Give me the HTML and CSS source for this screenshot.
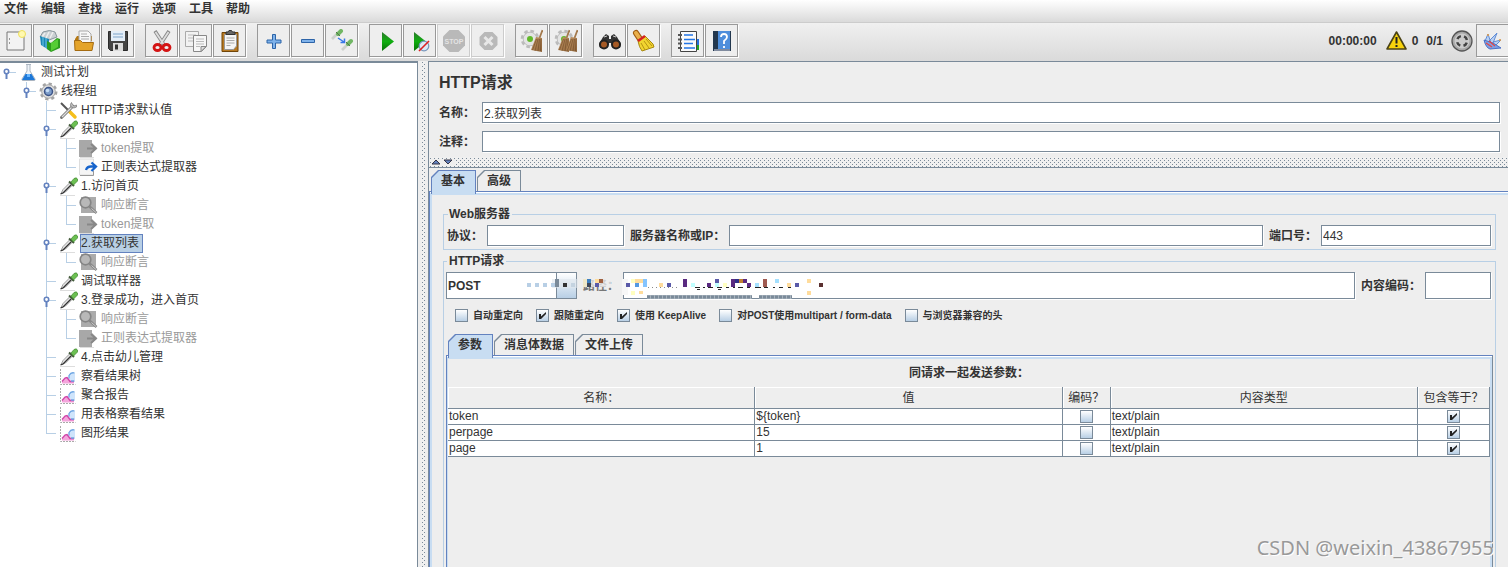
FILE: index.html
```html
<!DOCTYPE html>
<html lang="zh-CN">
<head>
<meta charset="utf-8">
<title>HTTP请求</title>
<link rel="stylesheet" href="styles.css">
</head>
<body>
<svg class="defs" aria-hidden="true">
  <defs>
    <linearGradient id="green" x1="0" y1="0" x2="0" y2="1"><stop offset="0" stop-color="#2c7a2c"/><stop offset=".5" stop-color="#0fae0f"/><stop offset="1" stop-color="#067006"/></linearGradient>
    <linearGradient id="straw" x1="0" y1="0" x2="1" y2="1"><stop offset="0" stop-color="#c79a68"/><stop offset="1" stop-color="#8d6238"/></linearGradient>
    <symbol id="handle" viewBox="0 0 9 12"><path d="M4.500 5v6" stroke="#6382bf" stroke-width="2"/><circle cx="4.500" cy="3.500" r="2.200" fill="#fff" stroke="#6382bf" stroke-width="1.600"/></symbol>
    <symbol id="flask" viewBox="0 0 19 19"><path d="M7 1.500h5M8 2v6l-5 8q-.5 1.500 1 1.500h11q1.500 0 1-1.500l-5-8V2" fill="#eef3f8" stroke="#aab4c0"/><path d="M6.500 11h6l3.500 6H3z" fill="#1d78d8"/><path d="M8 11h3v3H8z" fill="#64b4ff"/></symbol>
    <symbol id="gear" viewBox="0 0 19 19"><circle cx="9.500" cy="9.500" r="7.800" fill="none" stroke="#a4a4a4" stroke-width="2.400" stroke-dasharray="3.200 2.900"/><circle cx="9.500" cy="9.500" r="6.800" fill="#dcdcdc" stroke="#a4a4a4"/><circle cx="9.500" cy="9.500" r="4" fill="#7c9cc9" stroke="#3c5488" stroke-width="1.500"/><circle cx="8.500" cy="8.500" r="1.800" fill="#c4dcf6"/></symbol>
    <symbol id="tools" viewBox="0 0 19 19"><path d="M2 2l8 8" stroke="#555" stroke-width="2"/><path d="M10 10l6 6" stroke="#f5bf1c" stroke-width="3.500" stroke-linecap="round"/><path d="M2.500 16.500L14 5" stroke="#777" stroke-width="3" stroke-linecap="round"/><path d="M3 16L14 5" stroke="#ddd" stroke-width="1.200"/><path d="M12.500 1.500q-2 2-.5 4.500 3 2 5.500 0V4L15 5l-1.500-1.500z" fill="#bbb" stroke="#777" stroke-width=".7"/></symbol>
    <symbol id="pipette" viewBox="0 0 19 19"><path d="M1 18.500h15" stroke="#ddd"/><path d="M2 16.500l2-4 7-7 2.500 2.500-7 7z" fill="#e5e5e5" stroke="#888" stroke-width=".8"/><path d="M1.500 17l2.500-1 8-8" fill="none" stroke="#333" stroke-width="1.200"/><path d="M10 4.500l5 4.500" stroke="#435b3a" stroke-width="2"/><path d="M12 5l3-3.500q2.500-1.500 3.500.5v2L14.500 8z" fill="#6cc052" stroke="#41862f" stroke-width=".7"/></symbol>
    <symbol id="extract-off" viewBox="0 0 19 19"><path d="M0 1h13v3l5 5-5 5v4H0z" fill="#a8a8a8"/><path d="M8 9.500h8M12 5l5 4.500-5 4.500" stroke="#888" stroke-width="2" fill="none"/><path d="M1 18.500h14" stroke="#ddd"/></symbol>
    <symbol id="extract" viewBox="0 0 19 19"><path d="M.5 1h14v16H.5z" fill="#f5f5f5" stroke="#ddd"/><path d="M1 17.500h13.500V13" fill="none" stroke="#999"/><path d="M7 12q1-3.500 5-3.500h5M12.500 4.500l4.500 4-4.500 4.500" stroke="#1764cc" stroke-width="2.300" fill="none"/></symbol>
    <symbol id="assert-off" viewBox="0 0 19 19"><path d="M2 1h15v16H2z" fill="#ababab"/><circle cx="6.500" cy="6.500" r="5.300" fill="#b8b8b8" stroke="#858585" stroke-width="1.700"/><path d="M10.500 10.500l7 6.500" stroke="#888" stroke-width="2.500"/><path d="M12.500 12.500l4.500 4" stroke="#ccc"/></symbol>
    <symbol id="chart" viewBox="0 0 19 19"><path d="M1.500 2v15.500h15" fill="none" stroke="#aaa" stroke-dasharray="2 1"/><path d="M3 16.500V14l4-4 3 1 2 3 3 1v1.500z" fill="#f4a6dc"/><path d="M3 14.500l3-3.500 2-.5 3 4h4" fill="none" stroke="#d045a8" stroke-width="1.300"/><path d="M10 12V8q2-4 6-2v7l-3 1z" fill="#cfe4fb"/><path d="M10 11.500V8.500q2-3.500 5.500-2.500M12 14h3.500" fill="none" stroke="#6ea5e2" stroke-width="1.300"/></symbol>
    <symbol id="broom" viewBox="0 0 12 24"><path d="M8.500 9L11.500 1" stroke="#a3794c" stroke-width="1.800"/><path d="M5 8l6 1v14l-11-2z" fill="url(#straw)"/><path d="M5.500 10l-4 11M7 10l-3 12M8.500 10L7 22M10 10l-.5 12" stroke="#75502c" stroke-width=".7"/></symbol>
    <symbol id="cog" viewBox="0 0 22 22"><circle cx="11" cy="11" r="8.500" fill="none" stroke="#bbb" stroke-width="3.500" stroke-dasharray="3.800 2.900"/><circle cx="11" cy="11" r="7.500" fill="#e4e4e4" stroke="#bbb"/><circle cx="11" cy="11" r="3.300" fill="#62b92a"/></symbol>
  </defs>
</svg>

<nav class="menubar">
  <button>文件</button><button>编辑</button><button>查找</button><button>运行</button><button>选项</button><button>工具</button><button>帮助</button>
</nav>

<div class="toolbar">
  <div class="group">
    <button aria-label="新建"><svg viewBox="0 0 24 24"><path d="M3 3h17v18H3z" fill="#f3f3f3" stroke="#777"/><path d="M5.500 9v2M5.500 13v2" stroke="#999"/><circle cx="18" cy="5" r="3.500" fill="#fff8b0" stroke="#efe05a"/></svg></button>
    <button aria-label="模板"><svg viewBox="0 0 24 24"><path d="M2 8l3-5q7-3 12 0l2 5-8 3z" fill="#c9cfd2" stroke="#88959b"/><path d="M4 8l3-4M8 9l3-6M12 9l3-6" stroke="#eee" stroke-width="1.500"/><path d="M2 7l9 3v11l-8-5z" fill="#1c86b5"/><path d="M5 8v9M8 9v10" stroke="#70c9e6"/><path d="M9 12l4 2 6-5 3 1v9l-9 4-4-3z" fill="#2c9c1e"/><path d="M13 14l7-4v8l-7 4z" fill="#55cd35"/></svg></button>
    <button aria-label="打开"><svg viewBox="0 0 24 24"><path d="M3 10l2-3h15v5H3z" fill="#b57813"/><path d="M7 2h9l3 3v10H7z" fill="#f7f7f7" stroke="#aaa"/><path d="M9 5h6M9 7.500h8M9 10h8" stroke="#aaa"/><path d="M2.500 11.500h6l2 2h11L20 21.500H3z" fill="#e4a42a" stroke="#a56b10"/></svg></button>
    <button aria-label="保存"><svg viewBox="0 0 24 24"><path d="M2.500 2.500h19v19h-17l-2-2z" fill="#454545" stroke="#2b2b2b"/><path d="M5 2h14v10H5z" fill="#e4eef8"/><path d="M7 5h10M7 8h10" stroke="#7da3c9"/><path d="M7 14h10v8H7z" fill="#ddd"/><path d="M9 15.500h3v5H9z" fill="#333"/></svg></button>
  </div>
  <div class="group">
    <button aria-label="剪切"><svg viewBox="0 0 24 24"><path d="M5 2l9 14M19 2l-9 14" stroke="#888" stroke-width="3.500"/><path d="M5.500 3l8 12M18.500 3l-8 12" stroke="#ddd" stroke-width="1.800"/><ellipse cx="7.500" cy="18.500" rx="3.500" ry="3" fill="none" stroke="#d41414" stroke-width="2.800"/><ellipse cx="16.500" cy="18.500" rx="3.500" ry="3" fill="none" stroke="#d41414" stroke-width="2.800"/></svg></button>
    <button aria-label="复制"><svg viewBox="0 0 24 24"><path d="M1.500 2.500h13v15h-13z" fill="#f2f2f2" stroke="#aaa"/><path d="M4 6h8M4 9h5M4 12h5" stroke="#bbb"/><path d="M9.500 6.500h13v11l-5 5h-8z" fill="#f7f7f7" stroke="#888"/><path d="M12 10h8M12 12.500h8M12 15h8M12 17.500h4" stroke="#bbb"/><path d="M22 17.500h-5v5z" fill="#ddd" stroke="#888"/></svg></button>
    <button aria-label="粘贴"><svg viewBox="0 0 24 24"><path d="M4 3.500h16v19H4z" fill="#b87a22" stroke="#704508"/><path d="M6.500 5.500h12V17l-3 3.500h-9z" fill="#f5f5f5" stroke="#999"/><path d="M8.500 9h8M8.500 11.500h8M8.500 14h8M8.500 16.500h4" stroke="#aaa"/><path d="M8 5V3h2l1-1.500h2.500l1 1.500H17v2.500H8z" fill="#666" stroke="#333"/></svg></button>
  </div>
  <div class="group">
    <button aria-label="展开"><svg viewBox="0 0 24 24"><path d="M10.500 5.500h3v5.500h5.500v3h-5.500v5.500h-3v-5.500H5v-3h5.500z" fill="#7fb2ea" stroke="#2d64a8"/></svg></button>
    <button aria-label="折叠"><svg viewBox="0 0 24 24"><path d="M5.500 10.500h13v3h-13z" fill="#7fb2ea" stroke="#2d64a8"/></svg></button>
    <button aria-label="切换"><svg viewBox="0 0 24 24"><path d="M2 10l6-6M12 21l6-6" stroke="#cdd1cd" stroke-width="2.800"/><path d="M8 5l3-3M18 15l3-3" stroke="#71b764" stroke-width="4" stroke-linecap="round"/><path d="M6 3l4 4M16 13l4 4" stroke="#56724f" stroke-width="1"/><path d="M8 9l6 4M14.500 9.500v4h-4" fill="none" stroke="#3878e8" stroke-width="1.500"/></svg></button>
  </div>
  <div class="group">
    <button aria-label="启动"><svg viewBox="0 0 24 24"><path d="M8 3l12 9.500L8 22z" fill="url(#green)"/></svg></button>
    <button aria-label="不停顿开始"><svg viewBox="0 0 24 24"><path d="M6 3l12 9.500L6 22z" fill="url(#green)"/><circle cx="16" cy="17" r="4.800" fill="#dce8f5" stroke="#7896bb" stroke-width="1.200"/><path d="M11 22L21 12" stroke="#d22" stroke-width="1.600"/></svg></button>
    <button aria-label="停止" disabled><svg viewBox="0 0 24 24"><path d="M7.500 1h9L23 7.500v9L16.500 23h-9L1 16.500v-9z" fill="#b9b9b9"/><text class="stop-text" x="12" y="14.500" text-anchor="middle">STOP</text></svg></button>
    <button aria-label="关闭" disabled><svg viewBox="0 0 24 24"><path d="M8.500 3h8L21.500 8v8l-5 5h-8l-5-5V8z" fill="#b9b9b9"/><path d="M8.500 8l8 8M16.500 8l-8 8" stroke="#e8e8e8" stroke-width="3"/></svg></button>
  </div>
  <div class="group">
    <button aria-label="清除"><svg viewBox="0 0 24 24"><use href="#cog" x="0" y="0" width="20" height="20"/><use href="#broom" x="11" y="0" width="12" height="24"/></svg></button>
    <button aria-label="清除全部"><svg viewBox="0 0 24 24"><use href="#cog" x="0" y="0" width="20" height="20"/><use href="#broom" x="4" y="0" width="12" height="24"/><use href="#broom" x="12" y="0" width="12" height="24"/></svg></button>
  </div>
  <div class="group">
    <button aria-label="查找"><svg viewBox="0 0 24 24"><path d="M5 8l3-3 3 2v3h2V7l3-2 3 3 4 7-1 4h-7l-2-5h-2l-2 5H2l-1-4z" fill="#333"/><circle cx="6" cy="15.500" r="4" fill="#a65a25" stroke="#222" stroke-width="2"/><circle cx="18" cy="15.500" r="4" fill="#a65a25" stroke="#222" stroke-width="2"/><path d="M6 8l3-1M15 7l3 1" stroke="#ccc"/></svg></button>
    <button aria-label="重置查找"><svg viewBox="0 0 24 24"><path d="M4 4l4 6" stroke="#a05c12" stroke-width="6" stroke-linecap="round"/><path d="M4 4l4 6" stroke="#eab04c" stroke-width="4" stroke-linecap="round"/><path d="M6 12l7-5 8 8 1 3-12 4q-3-4-4-10z" fill="#f1d430" stroke="#a88810"/><path d="M9 14l4 7M12 12l5 7M14 10l6 7" stroke="#b69312"/><path d="M6 12l7-5" stroke="#d52020" stroke-width="2.500"/></svg></button>
  </div>
  <div class="group">
    <button aria-label="函数助手"><svg viewBox="0 0 24 24"><path d="M4.500 2.500h16v20h-16z" fill="#fafafa" stroke="#444"/><path d="M21 10h2v6h-2z" fill="#236edb"/><path d="M21 16h2v5h-2z" fill="#20a020"/><path d="M8 6h9M8 10.500h11M8 14.500h9M8 19h11" stroke="#2376e6" stroke-width="1.500"/><path d="M2 6h4M2 10.500h4M2 14.500h4M2 19h4" stroke="#555" stroke-width="2"/></svg></button>
    <button aria-label="帮助"><svg viewBox="0 0 24 24"><path d="M3 2h18v20H3z" fill="#23384f"/><path d="M8 2h12v18H8z" fill="#4e8edb"/><path d="M4 21h16" stroke="#dde"/><path d="M11 8q0-3 3-3t3 3q0 2-3 4v3M14 17v2" fill="none" stroke="#fff" stroke-width="1.800"/></svg></button>
  </div>
  <div class="status">
    <span class="time">00:00:00</span>
    <svg class="warn" viewBox="0 0 21 19"><path d="M10.500 1L20 18H1z" fill="#f8d30c" stroke="#4b4315" stroke-width="1.600" stroke-linejoin="round"/><path d="M10.500 6v6.500M10.500 14v2" stroke="#222" stroke-width="2"/></svg>
    <span class="errors">0</span>
    <span class="threads">0/1</span>
    <svg class="ring" viewBox="0 0 22 22"><circle cx="11" cy="11" r="10" fill="#aaa" stroke="#555" stroke-width="1.300"/><circle cx="11" cy="11" r="7.500" fill="#ccc"/><circle cx="11" cy="11" r="5" fill="none" stroke="#444" stroke-width="2.500" stroke-dasharray="4.500 3.350" stroke-dashoffset="-1.600"/></svg>
    <button aria-label="日志"><svg viewBox="0 0 24 24"><path d="M4 12l3-7 3 9M8 12l8-8-4 10M12 13l8-2-6 6" fill="#b9d0f2" stroke="#5f8cd6"/><path d="M3 11q2 8 6 9l11-1-8-5z" fill="#7d9fe6" stroke="#4c70c4"/><path d="M5 14l6 4M8 12l6 5" stroke="#e04848" stroke-width="1.300"/><circle cx="7" cy="6" r="1" fill="#e69b42"/><circle cx="19" cy="11" r="1" fill="#e69b42"/></svg></button>
  </div>
</div>

<main class="workspace">
  <aside class="tree-pane">
    <ul class="tree root">
      <li><div class="node"><svg class="knob"><use href="#handle"/></svg><svg class="ico"><use href="#flask"/></svg><span>测试计划</span></div>
        <ul class="tree">
          <li><div class="node"><svg class="knob"><use href="#handle"/></svg><svg class="ico"><use href="#gear"/></svg><span>线程组</span></div>
            <ul class="tree">
              <li><div class="node"><i class="knob"></i><svg class="ico"><use href="#tools"/></svg><span>HTTP请求默认值</span></div></li>
              <li><div class="node"><svg class="knob"><use href="#handle"/></svg><svg class="ico"><use href="#pipette"/></svg><span>获取token</span></div>
                <ul class="tree">
                  <li><div class="node off"><i class="knob"></i><svg class="ico"><use href="#extract-off"/></svg><span>token提取</span></div></li>
                  <li><div class="node"><i class="knob"></i><svg class="ico"><use href="#extract"/></svg><span>正则表达式提取器</span></div></li>
                </ul></li>
              <li><div class="node"><svg class="knob"><use href="#handle"/></svg><svg class="ico"><use href="#pipette"/></svg><span>1.访问首页</span></div>
                <ul class="tree">
                  <li><div class="node off"><i class="knob"></i><svg class="ico"><use href="#assert-off"/></svg><span>响应断言</span></div></li>
                  <li><div class="node off"><i class="knob"></i><svg class="ico"><use href="#extract-off"/></svg><span>token提取</span></div></li>
                </ul></li>
              <li><div class="node"><svg class="knob"><use href="#handle"/></svg><svg class="ico"><use href="#pipette"/></svg><span class="selected">2.获取列表</span></div>
                <ul class="tree">
                  <li><div class="node off"><i class="knob"></i><svg class="ico"><use href="#assert-off"/></svg><span>响应断言</span></div></li>
                </ul></li>
              <li><div class="node"><i class="knob"></i><svg class="ico"><use href="#pipette"/></svg><span>调试取样器</span></div></li>
              <li><div class="node"><svg class="knob"><use href="#handle"/></svg><svg class="ico"><use href="#pipette"/></svg><span>3.登录成功，进入首页</span></div>
                <ul class="tree">
                  <li><div class="node off"><i class="knob"></i><svg class="ico"><use href="#assert-off"/></svg><span>响应断言</span></div></li>
                  <li><div class="node off"><i class="knob"></i><svg class="ico"><use href="#extract-off"/></svg><span>正则表达式提取器</span></div></li>
                </ul></li>
              <li><div class="node"><i class="knob"></i><svg class="ico"><use href="#pipette"/></svg><span>4.点击幼儿管理</span></div></li>
              <li><div class="node"><i class="knob"></i><svg class="ico"><use href="#chart"/></svg><span>察看结果树</span></div></li>
              <li><div class="node"><i class="knob"></i><svg class="ico"><use href="#chart"/></svg><span>聚合报告</span></div></li>
              <li><div class="node"><i class="knob"></i><svg class="ico"><use href="#chart"/></svg><span>用表格察看结果</span></div></li>
              <li><div class="node"><i class="knob"></i><svg class="ico"><use href="#chart"/></svg><span>图形结果</span></div></li>
            </ul></li>
        </ul></li>
    </ul>
  </aside>
  <div class="divider"></div>
  <section class="editor">
    <div class="heading">
      <h1>HTTP请求</h1>
      <div class="line"><label for="name">名称：</label><input id="name" type="text" value="2.获取列表"></div>
      <div class="line"><label for="note">注释：</label><input id="note" type="text"></div>
    </div>
    <div class="splitter"><svg viewBox="0 0 24 6"><path d="M1 5l4-4 4 4z" fill="#6382bf" stroke="#334"/><path d="M13 1l4 4 4-4z" fill="#6382bf" stroke="#334"/></svg></div>

    <div class="tabs outer"><button class="tab active">基本</button><button class="tab">高级</button></div>
    <div class="page outer-page">
      <fieldset class="web">
        <legend>Web服务器</legend>
        <div class="row">
          <label for="proto">协议：</label><input id="proto" class="w-proto" type="text">
          <label for="host">服务器名称或IP：</label><input id="host" class="grow" type="text">
          <label for="port">端口号：</label><input id="port" class="w-port" type="text" value="443">
        </div>
      </fieldset>
      <fieldset class="request">
        <legend>HTTP请求</legend>
        <div class="row tall">
          <select aria-label="方法"><option>POST</option></select>
          <label class="path-label" for="path">路径：</label><input id="path" class="grow" type="text">
          <label for="enc">内容编码：</label><input id="enc" class="w-enc" type="text">
          <svg class="mosaic" viewBox="526 276 304 26" aria-hidden="true">
            <path d="M552 279h26v9h-26z" fill="#dfe6ec" opacity=".6"/>
            <path d="M527 283h4v4h-4zM535 283h4v4h-4zM543 283h4v4h-4zM551 283h4v4h-4z" fill="#b8cfe5"/>
            <path d="M555 279h4v8h-4z" fill="#7a8a99"/><path d="M563 283h4v4h-4z" fill="#333"/><path d="M571 283h4v4h-4z" fill="#c4d3e0"/>
            <path d="M582 278h29v9h-29z" fill="#eee" opacity=".75"/>
            <path d="M583 279h4v8h-4z" fill="#f0e8c8"/><path d="M587 279h4v4h-4z" fill="#4080c0"/><path d="M587 283h4v4h-4z" fill="#404858"/><path d="M595 283h4v4h-4z" fill="#5a5aa8"/><path d="M595 279h4v4h-4z" fill="#ffdc9c"/><path d="M599 279h4v4h-4z" fill="#a06040"/>
            <path d="M622 279h6v16h-6z" fill="#f7f7f7"/>
            <path d="M626 283h4v4h-4zM667 283h4v4h-4zM715 279h4v4h-4zM795 283h4v4h-4z" fill="#5a5aa8"/>
            <path d="M631 279h4v4h-4zM723 283h4v4h-4zM631 291h4v4h-4z" fill="#ffffc0"/>
            <path d="M635 279h8v4h-8zM659 283h4v4h-4zM787 283h4v4h-4zM807 279h4v4h-4zM807 291h4v4h-4zM639 291h4v3h-4z" fill="#ffdc9c"/>
            <path d="M643 279h4v8h-4z" fill="#84c4ff"/><path d="M635 283h4v4h-4z" fill="#5599e0"/>
            <path d="M683 279h4v8h-4zM707 283h4v4h-4zM731 279h4v8h-4zM743 279h4v4h-4zM747 283h4v4h-4z" fill="#5a2a80"/>
            <path d="M735 279h4v4h-4z" fill="#303088"/><path d="M739 279h4v4h-4z" fill="#c08030"/>
            <path d="M691 283h4v4h-4zM715 283h4v4h-4z" fill="#c0ffff"/><path d="M755 283h4v4h-4zM775 279h4v4h-4z" fill="#a4e0ff"/>
            <path d="M763 279h4v8h-4z" fill="#a05a50"/><path d="M819 283h4v4h-4z" fill="#5a3030"/>
            <path d="M648 287.500h30" stroke="#888" stroke-dasharray="1 3"/>
            <path d="M695 287.500h5M703 287.500h2M708 287.500h5M717 287.500h5M726 287.500h3M733 287.500h2M738 287.500h5M747 287.500h3M755 287.500h6M764 287.500h4M773 287.500h2M779 287.500h4M788 287.500h3M697 289.500h3M718 289.500h3" stroke="#222"/>
            <path d="M647 297h105M759 297h33" stroke="#a9b4be" stroke-width="4"/><path d="M647 297h105M759 297h33" stroke="#7a8a99" stroke-width="3" stroke-dasharray="3 1"/>
          </svg>
        </div>
        <div class="checks">
          <label><input type="checkbox">自动重定向</label>
          <label><input type="checkbox" checked>跟随重定向</label>
          <label><input type="checkbox" checked>使用 KeepAlive</label>
          <label><input type="checkbox">对POST使用multipart / form-data</label>
          <label><input type="checkbox">与浏览器兼容的头</label>
        </div>
        <div class="tabs inner"><button class="tab active">参数</button><button class="tab">消息体数据</button><button class="tab">文件上传</button></div>
        <div class="page inner-page">
          <p class="caption" id="params-title">同请求一起发送参数：</p>
          <table aria-labelledby="params-title">
            <colgroup><col><col><col class="c-enc"><col><col class="c-inc"></colgroup>
            <thead><tr><th>名称：</th><th>值</th><th>编码？</th><th>内容类型</th><th>包含等于？</th></tr></thead>
            <tbody>
              <tr><td>token</td><td>${token}</td><td class="mid"><input type="checkbox" aria-label="编码"></td><td>text/plain</td><td class="mid"><input type="checkbox" aria-label="包含等于" checked></td></tr>
              <tr><td>perpage</td><td>15</td><td class="mid"><input type="checkbox" aria-label="编码"></td><td>text/plain</td><td class="mid"><input type="checkbox" aria-label="包含等于" checked></td></tr>
              <tr><td>page</td><td>1</td><td class="mid"><input type="checkbox" aria-label="编码"></td><td>text/plain</td><td class="mid"><input type="checkbox" aria-label="包含等于" checked></td></tr>
            </tbody>
          </table>
        </div>
      </fieldset>
    </div>
  </section>
</main>
<div class="watermark">CSDN @weixin_43867955</div>
</body>
</html>
```

FILE: styles.css
```css
:root {
  --slate: #7a8a99;
  --blue: #6382bf;
  --pale: #b8cfe5;
  --sky: #c8ddf2;
  --panel: #eeeeee;
}

* { box-sizing: border-box; }

body {
  margin: 0;
  height: 100vh;
  display: flex;
  flex-direction: column;
  overflow: hidden;
  background: var(--panel);
  color: #333;
  font: 12px/16px "Liberation Sans", "Noto Sans CJK SC", sans-serif;
}

button, input, select { font: inherit; color: inherit; margin: 0; padding: 0; }
button { border: 0; background: none; }
.defs { position: absolute; width: 0; height: 0; }

.menubar {
  display: flex;
  gap: 13px;
  height: 22px;
  padding: 0 4px 5px;
  background: linear-gradient(#fff, #dadada);
  font-weight: bold;
}

.toolbar {
  display: flex;
  gap: 11px;
  padding: 1px 0 4px;
  border-top: 1px solid #ccc;
  background: linear-gradient(#f0f0f0, #dadada);
}
.group { display: flex; gap: 1px; }
.group:first-child { margin-left: -1px; }
.toolbar button {
  width: 33px;
  height: 33px;
  display: grid;
  place-items: center;
  border: 1px solid #999;
  background: var(--panel);
  box-shadow: 1px 1px 0 #fff;
}
.toolbar button:disabled { border-color: #ccc; }
.toolbar button svg { width: 24px; height: 24px; }
.stop-text { font: bold 7px "Liberation Sans", sans-serif; fill: #e4e4e4; }
.status { display: flex; align-items: center; margin-left: auto; font-weight: bold; }
.warn { width: 21px; height: 19px; margin: 0 5px 0 9px; }
.threads { margin: 0 8px; }
.ring { width: 22px; height: 22px; margin-right: 3px; }
.status button { width: 32px; border-right: 0; }

.workspace { flex: 1; min-height: 0; display: flex; }

.tree-pane {
  flex: 0 0 418px;
  padding: 0;
  background: #fff;
  border-top: 2px solid var(--slate);
  border-right: 1px solid var(--slate);
}
.tree { list-style: none; margin: 0; padding: 0 0 0 20px; }
.tree.root { padding: 0; }
.tree li { position: relative; }
.tree .tree > li::before {
  content: "";
  position: absolute;
  left: 6px;
  top: 0;
  bottom: 0;
  width: 1px;
  background: var(--pale);
}
.tree .tree > li:last-child::before { bottom: auto; height: 10px; }
.node { position: relative; display: flex; align-items: center; height: 19px; }
.node::before {
  content: "";
  position: absolute;
  left: 7px;
  top: 9px;
  width: 9px;
  height: 1px;
  background: var(--pale);
}
.knob { position: relative; width: 9px; height: 12px; margin: 2px 8px 0 2px; }
.ico { width: 19px; height: 19px; margin-right: 2px; }
.node span { border: 1px solid transparent; line-height: 17px; white-space: nowrap; }
.node .selected { background: var(--pale); border-color: var(--blue); padding-right: 3px; }
.node.off { color: #999; }

.divider, .splitter {
  background: #f0f0f0 url("data:image/svg+xml,%3Csvg xmlns='http://www.w3.org/2000/svg' width='4' height='4'%3E%3Cpath d='M0 0h1v1H0zM2 2h1v1H2z' fill='%237a8a99'/%3E%3C/svg%3E") 1px 1px;
}
.divider { flex: 0 0 10px; border: solid #eee; border-width: 0 3px; }

.editor {
  flex: 1;
  min-width: 0;
  display: flex;
  flex-direction: column;
  border-left: 1px solid var(--slate);
  border-top: 1px solid var(--slate);
}
.heading { padding: 9px 8px 5px 10px; display: grid; gap: 8px; }
h1 { margin: 0; font-size: 16px; line-height: 23px; }
.line { display: grid; grid-template-columns: 43px 1fr; align-items: center; font-weight: bold; }

input[type="text"] {
  min-width: 0;
  height: 21px;
  padding: 0 1px;
  border: 1px solid var(--slate);
  border-radius: 0;
  background: #fff;
  box-shadow: 1px 1px 0 #fff;
  font-weight: normal;
}
.splitter { height: 11px; border-bottom: 1px solid var(--slate); line-height: 0; }
.splitter svg { width: 24px; height: 6px; margin: 2px 0 0 2px; background: var(--panel); }

.tabs { display: flex; gap: 1px; }
.tabs.outer { padding: 2px 0 0 2px; }
.tabs.inner { padding: 0 0 0 2px; }
.tab {
  position: relative;
  isolation: isolate;
  height: 21px;
  padding: 0 10px;
  font-weight: bold;
  background: var(--slate);
  clip-path: polygon(0 7px, 7px 0, 100% 0, 100% 100%, 0 100%);
}
.tab::before {
  content: "";
  position: absolute;
  z-index: -1;
  inset: 1px 1px 0;
  background: var(--panel);
  clip-path: polygon(0 7px, 7px 0, 100% 0, 100% 100%, 0 100%);
}
.tab.active {
  z-index: 1;
  height: 24px;
  margin-bottom: -3px;
  padding: 0 11px 3px 10px;
  background: var(--blue);
}
.tab.active::before { background: var(--sky); }

.page {
  flex: 1;
  display: flex;
  flex-direction: column;
  border-top: 1px solid var(--blue);
  border-left: 1px solid var(--blue);
}
.outer-page { box-shadow: inset 0 1px #fff, inset 2px 3px var(--sky); padding: 14px 12px 0 13px; }
.inner-page {
  border-right: 1px solid var(--slate);
  box-shadow: inset 0 1px #fff, inset 1px 3px var(--sky), inset -2px 0 var(--sky);
  padding: 5px 2px 0 1px;
}

fieldset { margin: 0; min-width: 0; border: 1px solid var(--pale); padding: 0 4px 0 3px; }
legend { margin-left: 1px; padding: 0 2px 0 1px; font-weight: bold; }
.web { padding-bottom: 3px; margin-bottom: 3px; }
.request { flex: 1; padding: 0 2px; border-bottom: 0; display: flex; flex-direction: column; }
.request legend { padding-left: 2px; }
.row { position: relative; display: flex; align-items: center; font-weight: bold; padding-top: 3px; }
.row label { white-space: nowrap; margin: 0 4px 0 6px; }
.row label:first-child { margin-left: 0; }
.grow { flex: 1; }
.w-proto { width: 137px; }
.w-port { width: 170px; }
.w-enc { width: 66px; }
.tall { padding-right: 2px; }
.tall input[type="text"], select { height: 27px; }
.path-label { width: 36px; color: #777; }
select {
  appearance: none;
  width: 131px;
  padding-left: 1px;
  border: 1px solid var(--slate);
  border-radius: 0;
  background: linear-gradient(90deg, #fff 109px, var(--slate) 109px, var(--slate) 110px, transparent 110px), linear-gradient(#fff, var(--pale));
}
.mosaic { position: absolute; left: 80px; top: 7px; width: 304px; height: 26px; }

.checks { display: flex; gap: 13px; padding: 9px 9px 11px; font-size: 10px; line-height: 15px; font-weight: bold; white-space: nowrap; }
.checks label { display: flex; align-items: center; gap: 5px; }
input[type="checkbox"] {
  appearance: none;
  width: 13px;
  height: 13px;
  border: 1px solid var(--slate);
  background: linear-gradient(#fff, var(--pale));
}
input[type="checkbox"]:checked {
  background: url("data:image/svg+xml,%3Csvg xmlns='http://www.w3.org/2000/svg' width='11' height='11'%3E%3Cpath d='M2 4h2v2.500L9 2v2L4 9H2z' fill='%23222'/%3E%3C/svg%3E") no-repeat, linear-gradient(#fff, var(--pale));
}

.caption { margin: 0; padding: 4px 0 6px; text-align: center; font-weight: bold; }
table { width: 100%; table-layout: fixed; border-collapse: separate; border-spacing: 0; background: #fff; }
.c-enc { width: 48px; }
.c-inc { width: 72px; }
th, td { padding: 0 1px; border: solid var(--slate); border-width: 0 1px 1px 0; white-space: nowrap; overflow: hidden; }
th { height: 22px; font-weight: normal; background: var(--panel); box-shadow: inset 1px 1px #fff; }
td { height: 16px; line-height: 15px; }
.mid { text-align: center; line-height: 0; }
.mid input { vertical-align: middle; }

.watermark {
  position: absolute;
  right: 14px;
  bottom: 6px;
  font: 20px/26px "Noto Sans", sans-serif;
  color: #999;
  text-shadow: 1px 1px 0 #fff;
}
```
